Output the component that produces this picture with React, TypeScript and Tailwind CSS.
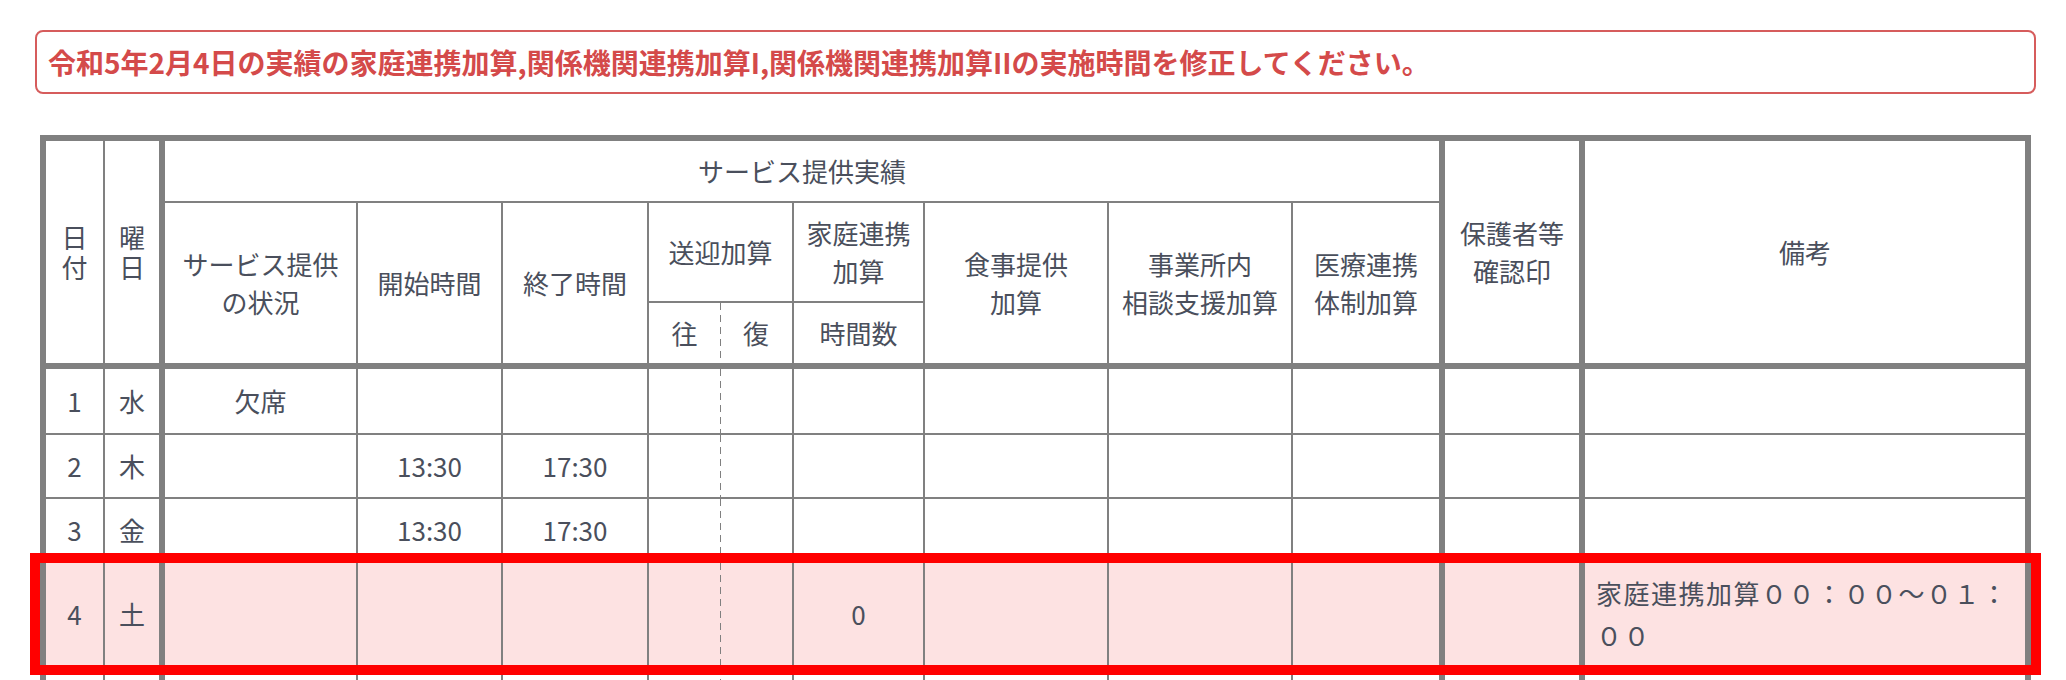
import React from "react";

type CellProps = { className?: string; children?: React.ReactNode };

const Cell = ({ className = "", children }: CellProps) => (
  <div className={`flex items-center justify-center text-center border-[#808080] ${className}`}>{children}</div>
);

const dashed =
  "bg-[image:repeating-linear-gradient(to_bottom,#808080_0px,#808080_7px,transparent_7px,transparent_12px)] bg-no-repeat bg-[length:1px_100%]";

const cols = [
  "col-start-1 border-l-[6px]",
  "col-start-2 border-l-2",
  "col-start-3 border-l-[6px]",
  "col-start-4 border-l-2",
  "col-start-5 border-l-2",
  "col-start-6 border-l-2",
  `col-start-7 ${dashed}`,
  "col-start-8 border-l-2",
  "col-start-9 border-l-2",
  "col-start-10 border-l-2",
  "col-start-11 border-l-2",
  "col-start-12 border-l-[6px]",
  "col-start-13 border-l-[6px] border-r-[6px] !justify-start !text-left px-[11px] tracking-[1.5px]",
];

const rowStarts = ["row-start-4", "row-start-5", "row-start-6", "row-start-7", "row-start-8", "row-start-9"];

// rows 5 and 6 sit below the fold, only their lines show
const rows = [
  { day: "1", week: "水", status: "欠席", start: "", end: "", hours: "", note: "" },
  { day: "2", week: "木", status: "", start: "13:30", end: "17:30", hours: "", note: "" },
  { day: "3", week: "金", status: "", start: "13:30", end: "17:30", hours: "", note: "" },
  { day: "4", week: "土", status: "", start: "", end: "", hours: "0", note: "家庭連携加算００：００～０１：００", error: true },
  { day: "", week: "", status: "", start: "", end: "", hours: "", note: "" },
  { day: "", week: "", status: "", start: "", end: "", hours: "", note: "" },
];

export default function App() {
  return (
    <div className="w-[2066px] h-[680px] overflow-hidden bg-white font-['Noto_Sans_CJK_JP','Noto_Sans',sans-serif] pt-[30px] pl-[35px]">
      {/* Error message */}
      <div className="w-[2001px] h-[64px] border-2 border-[#d65c5c] rounded-[8px] flex items-center pl-[11px] text-[28px] font-bold text-[#d44a4a]">
        令和5年2月4日の実績の家庭連携加算,関係機関連携加算I,関係機関連携加算IIの実施時間を修正してください。
      </div>

      {/* Record table */}
      <div className="mt-[41px] ml-[5px] grid grid-cols-[63px_56px_197px_145px_146px_73px_72px_131px_184px_184px_148px_140px_452px] grid-rows-[66px_100px_62px_70px_64px_64px_104px_64px_64px] text-[26px] text-[#4a4f5c] leading-[38px]">
        <Cell className="col-start-1 row-start-1 row-span-3 border-l-[6px] border-t-[6px] leading-[30px]">
          日<br />付
        </Cell>
        <Cell className="col-start-2 row-start-1 row-span-3 border-l-2 border-t-[6px] leading-[30px]">
          曜<br />日
        </Cell>
        <Cell className="col-start-3 col-span-9 row-start-1 border-l-[6px] border-t-[6px]">サービス提供実績</Cell>
        <Cell className="col-start-12 row-start-1 row-span-3 border-l-[6px] border-t-[6px]">
          保護者等<br />確認印
        </Cell>
        <Cell className="col-start-13 row-start-1 row-span-3 border-l-[6px] border-t-[6px] border-r-[6px]">備考</Cell>

        <Cell className="col-start-3 row-start-2 row-span-2 border-l-[6px] border-t-2">
          サービス提供<br />の状況
        </Cell>
        <Cell className="col-start-4 row-start-2 row-span-2 border-l-2 border-t-2">開始時間</Cell>
        <Cell className="col-start-5 row-start-2 row-span-2 border-l-2 border-t-2">終了時間</Cell>
        <Cell className="col-start-6 col-span-2 row-start-2 border-l-2 border-t-2">送迎加算</Cell>
        <Cell className="col-start-8 row-start-2 border-l-2 border-t-2">
          家庭連携<br />加算
        </Cell>
        <Cell className="col-start-9 row-start-2 row-span-2 border-l-2 border-t-2">
          食事提供<br />加算
        </Cell>
        <Cell className="col-start-10 row-start-2 row-span-2 border-l-2 border-t-2">
          事業所内<br />相談支援加算
        </Cell>
        <Cell className="col-start-11 row-start-2 row-span-2 border-l-2 border-t-2">
          医療連携<br />体制加算
        </Cell>

        <Cell className="col-start-6 row-start-3 border-l-2 border-t-2">往</Cell>
        <Cell className={`col-start-7 row-start-3 border-t-2 ${dashed}`}>復</Cell>
        <Cell className="col-start-8 row-start-3 border-l-2 border-t-2">時間数</Cell>

        {rows.map((r, i) => {
          const values = [r.day, r.week, r.status, r.start, r.end, "", "", r.hours, "", "", "", "", r.note];
          return values.map((v, c) => (
            <Cell
              key={`${i}-${c}`}
              className={`${cols[c]} ${rowStarts[i]} ${i === 0 ? "border-t-[6px]" : "border-t-2"} ${
                r.error ? "bg-[#fde2e2]" : ""
              } leading-[42px]`}
            >
              {v}
            </Cell>
          ));
        })}

        {/* highlighted error row */}
        <div className="col-span-full row-start-7 mt-[2px] outline-solid outline-[10px] outline-[#ff0000] pointer-events-none z-10" />
      </div>
    </div>
  );
}
